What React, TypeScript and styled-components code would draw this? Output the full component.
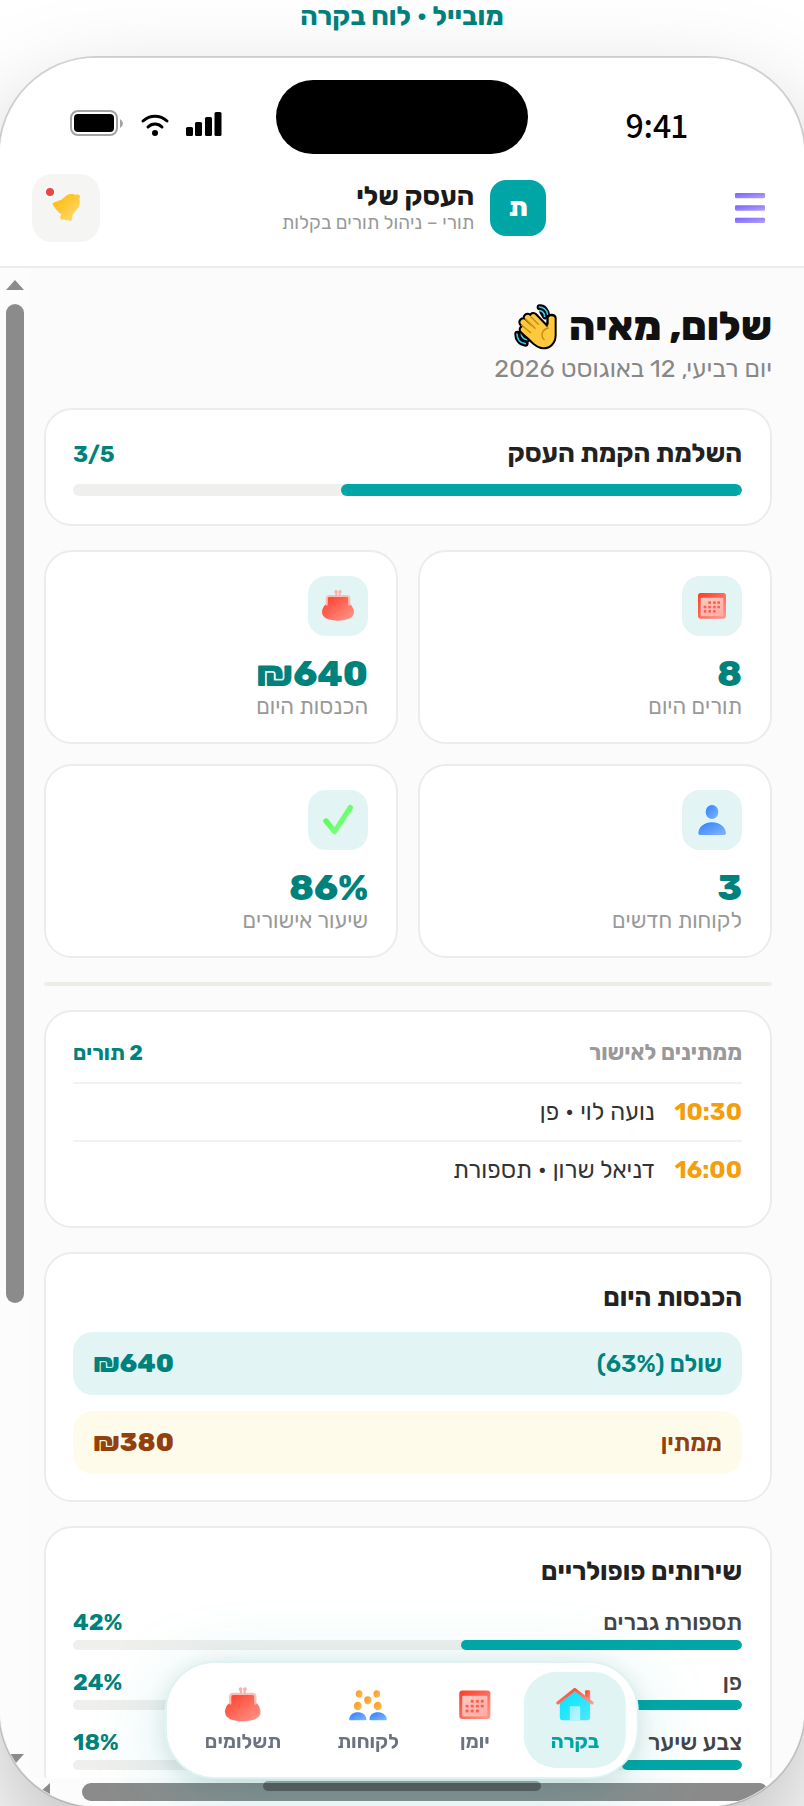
import React from "react";
import styled, { createGlobalStyle } from "styled-components";

const color = {
  teal: "#00a6a6",
  tealDark: "#00827c",
  tealSoft: "#e2f5f4",
  line: "#ecece8",
  ink: "#222222",
  muted: "#999999",
  scroll: "#8b8b8b",
};

const GlobalStyle = createGlobalStyle`
  *, *::before, *::after { box-sizing: border-box; }
  body {
    margin: 0;
    background: #ffffff;
    font-family: Rubik, "Open Sans", "Liberation Sans", sans-serif;
    color: ${color.ink};
  }
  h1, h2, p, ul { margin: 0; padding: 0; }
  button { border: 0; padding: 0; font: inherit; cursor: pointer; }
`;

const Page = styled.div`
  height: 100vh;
  display: flex;
  flex-direction: column;
  overflow: hidden;
`;

const Caption = styled.p`
  margin-bottom: 24px;
  text-align: center;
  font-size: 27px;
  line-height: 32px;
  font-weight: 700;
  color: ${color.tealDark};
`;

const Phone = styled.div`
  position: relative;
  flex: 1;
  min-height: 0;
  margin: 0 -2px -2px;
  display: flex;
  flex-direction: column;
  border: 2px solid rgba(0, 0, 0, 0.16);
  border-radius: 98px;
  background: #ffffff;
  background-clip: padding-box;
  box-shadow: 0 50px 110px rgba(0, 0, 0, 0.26);
`;

const Screen = styled.div`
  flex: 1;
  min-height: 0;
  display: flex;
  flex-direction: column;
  border-radius: 96px;
  overflow: hidden;
`;

const StatusBar = styled.div`
  display: grid;
  grid-template-columns: 1fr 252px 1fr;
  align-items: center;
  padding-top: 22px;
  background: #ffffff;
`;

const Island = styled.div`
  height: 74px;
  border-radius: 37px;
  background: #000000;
`;

const Clock = styled.div`
  padding: 16px 116px 0 0;
  font-family: Assistant, "Open Sans", sans-serif;
  font-size: 36px;
  line-height: 40px;
  font-weight: 600;
  color: #000000;
`;

const StatusIcons = styled.div`
  display: flex;
  justify-content: flex-end;
  padding: 12px 0 0 70px;
`;

const AppHeader = styled.header`
  display: flex;
  align-items: center;
  justify-content: space-between;
  padding: 20px 32px 24px;
  border-bottom: 2px solid ${color.line};
  background: #ffffff;
`;

const MenuButton = styled.button`
  width: 44px;
  height: 44px;
  display: grid;
  place-items: center;
  background: none;
`;

const BellButton = styled.button`
  position: relative;
  width: 68px;
  height: 68px;
  border-radius: 20px;
  display: grid;
  place-items: center;
  background: #f5f5f3;
`;

const BellDot = styled.span`
  position: absolute;
  top: 12px;
  left: 12px;
  width: 12px;
  height: 12px;
  border: 2px solid #ffffff;
  border-radius: 50%;
  background: #ef4444;
`;

const Brand = styled.div`
  display: flex;
  align-items: center;
  gap: 16px;
`;

const BrandMark = styled.span`
  width: 56px;
  height: 56px;
  border-radius: 16px;
  display: grid;
  place-items: center;
  background: ${color.teal};
  color: #ffffff;
  font-size: 26px;
  line-height: 30px;
  font-weight: 800;
`;

const BrandName = styled.p`
  font-size: 27px;
  line-height: 30px;
  font-weight: 700;
  color: #1a1a1a;
`;

const BrandTagline = styled.p`
  font-size: 19px;
  line-height: 24px;
  color: ${color.muted};
`;

const Body = styled.div`
  flex: 1;
  min-height: 0;
  display: grid;
  grid-template-columns: 1fr 30px;
  grid-template-rows: 1fr 28px;
  background: #fcfcfc;
`;

const Content = styled.main`
  overflow: auto;
  scrollbar-width: none;
  display: flex;
  flex-direction: column;
  gap: 24px;
  padding: 32px 32px 140px 14px;
  background: #fbfbfb;
  & > * { flex-shrink: 0; }
`;

const VerticalTrack = styled.div`
  display: flex;
  flex-direction: column;
  align-items: center;
  padding: 12px 0 14px;
`;

const VerticalThumb = styled.div`
  width: 18px;
  height: 67.3%;
  margin: 14px 0 auto;
  border-radius: 9px;
  background: ${color.scroll};
`;

const HorizontalTrack = styled.div`
  grid-column: 1 / -1;
  display: flex;
  align-items: center;
  padding: 0 36px 0 40px;
`;

const HorizontalThumb = styled.div`
  flex: 1;
  height: 18px;
  margin-left: 32px;
  border-radius: 9px;
  background: ${color.scroll};
`;

const Greeting = styled.h1`
  display: flex;
  align-items: center;
  gap: 12px;
  font-size: 40px;
  line-height: 54px;
  font-weight: 800;
  color: #111111;
`;

const Today = styled.p`
  font-size: 25px;
  line-height: 30px;
  color: #888888;
`;

const Card = styled.section`
  padding: 28px 28px 28px 27px;
  border: 2px solid ${color.line};
  border-radius: 28px;
  background: #ffffff;
`;

const RevenueCard = styled(Card)`
  padding-bottom: 26px;
`;

const CardTop = styled.div`
  display: flex;
  align-items: center;
  justify-content: space-between;
`;

const CardTitle = styled.h2`
  font-size: 26px;
  line-height: 32px;
  font-weight: 700;
`;

const Figure = styled.span`
  font-size: 23px;
  line-height: 28px;
  font-weight: 700;
  color: ${color.tealDark};
`;

const Track = styled.div<{ $height: number; $gap: number }>`
  height: ${(p) => p.$height}px;
  margin-top: ${(p) => p.$gap}px;
  border-radius: 6px;
  background: #efefed;
  overflow: hidden;
`;

const Fill = styled.div`
  height: 100%;
  border-radius: 6px;
  background: ${color.teal};
`;

const StatGrid = styled.div`
  display: grid;
  grid-template-columns: 1fr 1fr;
  gap: 20px;
`;

const StatCard = styled(Card)`
  padding-top: 24px;
  padding-bottom: 24px;
`;

const StatIcon = styled.div`
  width: 60px;
  height: 60px;
  border-radius: 18px;
  margin-bottom: 16px;
  display: grid;
  place-items: center;
  background: ${color.tealSoft};
`;

const StatValue = styled.p`
  font-size: 36px;
  line-height: 44px;
  font-weight: 800;
  color: ${color.tealDark};
`;

const StatLabel = styled.p`
  font-size: 22px;
  line-height: 22px;
  color: ${color.muted};
`;

const Divider = styled.hr`
  width: 100%;
  height: 4px;
  margin: 0;
  border: 0;
  border-radius: 2px;
  background: ${color.line};
`;

const PendingTop = styled(CardTop)`
  padding-bottom: 16px;
`;

const PendingTitle = styled.h2`
  font-size: 22px;
  line-height: 26px;
  font-weight: 700;
  color: ${color.muted};
`;

const PendingCount = styled.span`
  font-size: 21px;
  line-height: 26px;
  font-weight: 700;
  color: ${color.tealDark};
`;

const PendingList = styled.ul`
  list-style: none;
`;

const PendingRow = styled.li`
  display: flex;
  gap: 20px;
  padding: 14px 0;
  border-top: 2px solid #f2f2f2;
  font-size: 24px;
  line-height: 28px;
  color: #333333;
`;

const PendingTime = styled.time`
  font-weight: 700;
  color: #f59e0b;
`;

const RevenueRows = styled.div`
  display: grid;
  gap: 16px;
  margin-top: 18px;
`;

const RevenueRow = styled.div<{ $tone: "paid" | "waiting" }>`
  height: 63px;
  display: flex;
  align-items: center;
  justify-content: space-between;
  padding: 0 20px;
  border-radius: 20px;
  font-size: 24px;
  line-height: 28px;
  font-weight: 600;
  background: ${(p) => (p.$tone === "paid" ? color.tealSoft : "#fffbeb")};
  color: ${(p) => (p.$tone === "paid" ? color.tealDark : "#92400e")};
`;

const RevenueAmount = styled.span`
  font-size: 26px;
  font-weight: 800;
`;

const ServiceList = styled.div`
  display: grid;
  gap: 18px;
  margin-top: 20px;
`;

const ServiceName = styled.span`
  font-size: 23px;
  line-height: 28px;
  font-weight: 500;
  color: #444444;
`;

const BottomNav = styled.nav`
  position: absolute;
  bottom: 27px;
  left: 50%;
  transform: translateX(-50%);
  display: flex;
  gap: 2px;
  padding: 9px 11px;
  border: 2px solid #def3f2;
  border-radius: 50px;
  background: #ffffff;
  box-shadow: 0 16px 80px rgba(0, 166, 166, 0.2), 0 4px 24px rgba(0, 0, 0, 0.1);
`;

const NavItem = styled.button<{ $active?: boolean }>`
  display: flex;
  flex-direction: column;
  align-items: center;
  gap: 4px;
  padding: 13px 27px 15px;
  border-radius: 32px;
  background: ${(p) => (p.$active ? "#e0f4f3" : "transparent")};
  color: ${(p) => (p.$active ? color.teal : "#6b7280")};
  font-size: 20px;
  line-height: 24px;
  font-weight: ${(p) => (p.$active ? 700 : 600)};
`;

const HomeIndicator = styled.div`
  position: absolute;
  bottom: 15px;
  left: 50%;
  transform: translateX(-50%);
  width: 278px;
  height: 10px;
  border-radius: 5px;
  background: rgba(0, 0, 0, 0.32);
`;

const HiddenSvg = styled.svg`
  position: absolute;
`;

const gradients: [string, string, string][] = [
  ["g-red", "#ff3b26", "#ff9a90"],
  ["g-pink", "#ffc9c4", "#ffaaa2"],
  ["g-violet", "#7b61ff", "#b3a2ff"],
  ["g-gold", "#ffb800", "#ffdb7a"],
  ["g-blue", "#2b80ff", "#86b6ff"],
  ["g-green", "#45ff45", "#8dff8d"],
  ["g-cyan", "#00e5ff", "#4fe6ff"],
  ["g-ice", "#8ff0ff", "#c2f6ff"],
  ["g-orange", "#ff9412", "#ffc068"],
];

const Gradients = () => (
  <HiddenSvg width="0" height="0" aria-hidden="true">
    <defs>
      {gradients.map(([id, from, to]) => (
        <linearGradient key={id} id={id} x1="0" y1="0" x2="1" y2="1">
          <stop offset="0" stopColor={from} />
          <stop offset="1" stopColor={to} />
        </linearGradient>
      ))}
    </defs>
  </HiddenSvg>
);

type IconProps = { size: number };

const PurseIcon = ({ size }: IconProps) => (
  <svg width={size} height={size} viewBox="960 144 108 108" aria-hidden="true">
    <path fill="url(#g-red)" d="M982 170H1046V190C1057 196 1062 208 1062 217C1062 235 1040 242 1014 242C988 242 966 235 966 217C966 208 971 196 982 190Z" />
    <path fill="none" stroke="#fbbdb7" strokeWidth="6" strokeLinecap="round" d="M980 194V176Q980 168 988 168H1040Q1048 168 1048 176V194" />
    <path stroke="#fbb0a9" strokeWidth="6" d="M1009 156V167M1019 156V167" />
    <circle cx="1008" cy="155" r="5" fill="#fbb0a9" />
    <circle cx="1020" cy="155" r="5" fill="#fbb0a9" />
  </svg>
);

const calendarDots = [
  [923, 188], [937, 188], [950, 188],
  [909, 201], [923, 201], [937, 201], [950, 201],
  [909, 214], [923, 214], [937, 214],
];

const CalendarIcon = ({ size }: IconProps) => (
  <svg width={size} height={size} viewBox="876 144 108 108" aria-hidden="true">
    <rect x="888" y="159" width="84" height="77" rx="8" fill="url(#g-red)" />
    <rect x="896" y="173" width="68" height="56" rx="3" fill="url(#g-pink)" />
    {calendarDots.map(([x, y]) => (
      <rect key={`${x}-${y}`} x={x - 4} y={y - 4} width="8" height="8" rx="2" fill="#ff5f50" />
    ))}
  </svg>
);

const PersonIcon = ({ size }: IconProps) => (
  <svg width={size} height={size} viewBox="876 786 108 108" aria-hidden="true">
    <ellipse cx="930" cy="816" rx="19" ry="21" fill="url(#g-blue)" />
    <path fill="url(#g-blue)" d="M889 879C890 860 908 847 930 847C952 847 970 860 972 879Q972 885 966 885H894Q888 885 889 879Z" />
  </svg>
);

const CheckIcon = ({ size }: IconProps) => (
  <svg width={size} height={size} viewBox="960 786 108 108" aria-hidden="true">
    <path fill="none" stroke="url(#g-green)" strokeWidth="16" strokeLinecap="round" strokeLinejoin="round" d="M978 843L1004 875L1051 803" />
  </svg>
);

const HouseIcon = ({ size }: IconProps) => (
  <svg width={size} height={size} viewBox="454 557 120 120" aria-hidden="true">
    <rect x="545" y="573" width="15" height="34" rx="3" fill="url(#g-red)" />
    <path fill="url(#g-cyan)" d="M469 610L514 574L560 610V654Q560 663 551 663H478Q469 663 469 654Z" />
    <rect x="499" y="621" width="31" height="42" rx="2" fill="url(#g-ice)" />
    <path fill="none" stroke="url(#g-red)" strokeWidth="9" strokeLinecap="round" strokeLinejoin="round" d="M463 611L514 570L566 611" />
  </svg>
);

const PeopleIcon = ({ size }: IconProps) => (
  <svg width={size} height={size} viewBox="1042 557 120 120" aria-hidden="true">
    {[[1076, 584, 10], [1129, 584, 10], [1102, 603, 11], [1072, 620, 12], [1132, 620, 12]].map(([x, y, r]) => (
      <ellipse key={`${x}-${y}`} cx={x} cy={y} rx={r} ry={r + 1} fill="url(#g-orange)" />
    ))}
    <path fill="url(#g-blue)" d="M1046 660C1048 646 1058 639 1072 639C1086 639 1096 646 1098 660Q1098 663 1095 663H1049Q1046 663 1046 660Z" />
    <path fill="url(#g-blue)" d="M1107 660C1108 646 1118 639 1132 639C1146 639 1157 646 1159 660Q1159 663 1156 663H1110Q1107 663 1107 660Z" />
  </svg>
);

const MenuIcon = () => (
  <svg width="32" height="32" viewBox="996 576 96 96" aria-hidden="true">
    {[579, 616, 653].map((y) => (
      <rect key={y} x="999" y={y} width="90" height="16" rx="4" fill="url(#g-violet)" />
    ))}
  </svg>
);

const BellIcon = () => (
  <svg width="36" height="36" viewBox="144 570 108 108" aria-hidden="true">
    <path fill="url(#g-gold)" d="M158 612C158 606 176 605 187 597C196 590 200 582 215 582C221 582 224 584 227 585C231 580 240 583 240 590C240 593 238 595 238 597C242 609 239 619 230 629C218 641 217 646 216 657C215 664 209 665 204 660C200 661 196 661 192 658C187 662 179 657 181 650C181 647 183 645 184 643C176 638 161 622 158 612Z" />
  </svg>
);

const WaveIcon = () => (
  <svg width="43" height="46" viewBox="335 99 129 138" aria-hidden="true">
    <g fill="none" strokeLinecap="round" strokeLinejoin="round">
      <path stroke="#000000" strokeWidth="18" d="M412 109C424 108 434 120 435 134M420 122L428 136M345 188C344 204 354 216 370 218M358 188C358 198 366 206 374 207" />
      <path stroke="#36c5f0" strokeWidth="5" d="M411 108C424 108 434 118 436 130M412 119C420 120 426 127 427 136M344 189C344 205 354 216 369 218M356 186C357 197 364 205 374 206" />
    </g>
    <g stroke="#000000" strokeWidth="30" strokeLinecap="round">
      <path d="M393 138L430 176M376 140L415 184M363 154L405 196M364 176L400 208" />
    </g>
    <path fill="#000000" stroke="#000000" strokeWidth="12" strokeLinejoin="round" d="M425 165L438 158V141C438 132 457 132 457 142V192C457 215 442 229 423 229C405 229 390 212 370 188Z" />
    <g stroke="#ffc83d" strokeWidth="17" strokeLinecap="round">
      <path d="M393 138L430 176M376 140L415 184M363 154L405 196M364 176L400 208" />
    </g>
    <path fill="#ffc83d" d="M395 165L432 175L439 158V141C439 134 457 134 457 142V192C457 215 442 229 423 229C405 229 388 212 370 184Z" />
    <path fill="none" stroke="#c88a14" strokeWidth="4" strokeLinecap="round" d="M386 138L408 160M370 144L398 172M358 163L385 185M438 171C418 176 414 194 425 206" />
  </svg>
);

const StatusGlyphs = () => (
  <svg width="152" height="28" viewBox="70 109 152 28" aria-hidden="true">
    <rect x="71" y="111" width="46" height="24" rx="7" fill="none" stroke="#a3a3a3" strokeWidth="2" />
    <rect x="74" y="114" width="40" height="18" rx="4" />
    <path fill="#a3a3a3" d="M120 119Q123 121 123 123.500Q123 126 120 128Z" />
    <g fill="none" stroke="#000000" strokeWidth="3" strokeLinecap="round">
      <path d="M143 121C150 114.500 160 114.500 167 121" />
      <path d="M148 127C152 123 158 123 162 127" />
    </g>
    <circle cx="155" cy="133" r="3" />
    <rect x="186" y="127" width="7" height="9" rx="1.500" />
    <rect x="195" y="122" width="7" height="14" rx="1.500" />
    <rect x="205" y="117" width="7" height="19" rx="1.500" />
    <rect x="214.500" y="112" width="7" height="24" rx="1.500" />
  </svg>
);

const Arrow = ({ dir }: { dir: "up" | "down" | "left" }) => {
  const shapes = { up: "M0 10H18L9 0Z", down: "M0 0H18L9 10Z", left: "M10 0V18L0 9Z" };
  const flat = dir !== "left";
  return (
    <svg width={flat ? 18 : 10} height={flat ? 10 : 18} aria-hidden="true">
      <path fill={color.scroll} d={shapes[dir]} />
    </svg>
  );
};

const stats = [
  { Icon: CalendarIcon, value: "8", label: "תורים היום" },
  { Icon: PurseIcon, value: "₪640", label: "הכנסות היום" },
  { Icon: PersonIcon, value: "3", label: "לקוחות חדשים" },
  { Icon: CheckIcon, value: "86%", label: "שיעור אישורים" },
];

const pending = [
  { time: "10:30", text: "נועה לוי • פן" },
  { time: "16:00", text: "דניאל שרון • תספורת" },
];

const services = [
  { name: "תספורת גברים", share: 42 },
  { name: "פן", share: 24 },
  { name: "צבע שיער", share: 18 },
];

const navItems = [
  { Icon: HouseIcon, label: "בקרה", active: true },
  { Icon: CalendarIcon, label: "יומן" },
  { Icon: PeopleIcon, label: "לקוחות" },
  { Icon: PurseIcon, label: "תשלומים" },
];

export default function App() {
  return (
    <Page dir="rtl" lang="he">
      <GlobalStyle />
      <Gradients />
      <Caption>מובייל • לוח בקרה</Caption>
      <Phone>
        <Screen>
          <StatusBar>
            <Clock>9:41</Clock>
            <Island />
            <StatusIcons>
              <StatusGlyphs />
            </StatusIcons>
          </StatusBar>
          <AppHeader>
            <MenuButton type="button" aria-label="תפריט">
              <MenuIcon />
            </MenuButton>
            <Brand>
              <BrandMark>ת</BrandMark>
              <div>
                <BrandName>העסק שלי</BrandName>
                <BrandTagline>תורי – ניהול תורים בקלות</BrandTagline>
              </div>
            </Brand>
            <BellButton type="button" aria-label="התראות">
              <BellIcon />
              <BellDot />
            </BellButton>
          </AppHeader>
          <Body>
            <Content>
              <div>
                <Greeting>
                  <span>שלום, מאיה</span>
                  <WaveIcon />
                </Greeting>
                <Today>יום רביעי, 12 באוגוסט 2026</Today>
              </div>
              <Card>
                <CardTop>
                  <CardTitle>השלמת הקמת העסק</CardTitle>
                  <Figure dir="ltr">3/5</Figure>
                </CardTop>
                <Track $height={12} $gap={14}>
                  <Fill style={{ width: `${(3 / 5) * 100}%` }} />
                </Track>
              </Card>
              <StatGrid>
                {stats.map(({ Icon, value, label }) => (
                  <StatCard key={label}>
                    <StatIcon>
                      <Icon size={36} />
                    </StatIcon>
                    <StatValue>
                      <bdi dir="ltr">{value}</bdi>
                    </StatValue>
                    <StatLabel>{label}</StatLabel>
                  </StatCard>
                ))}
              </StatGrid>
              <Divider />
              <Card>
                <PendingTop>
                  <PendingTitle>ממתינים לאישור</PendingTitle>
                  <PendingCount>2 תורים</PendingCount>
                </PendingTop>
                <PendingList>
                  {pending.map(({ time, text }) => (
                    <PendingRow key={time}>
                      <PendingTime>{time}</PendingTime>
                      <span>{text}</span>
                    </PendingRow>
                  ))}
                </PendingList>
              </Card>
              <RevenueCard>
                <CardTitle>הכנסות היום</CardTitle>
                <RevenueRows>
                  <RevenueRow $tone="paid">
                    <span>שולם (63%)</span>
                    <RevenueAmount dir="ltr">₪640</RevenueAmount>
                  </RevenueRow>
                  <RevenueRow $tone="waiting">
                    <span>ממתין</span>
                    <RevenueAmount dir="ltr">₪380</RevenueAmount>
                  </RevenueRow>
                </RevenueRows>
              </RevenueCard>
              <Card>
                <CardTitle>שירותים פופולריים</CardTitle>
                <ServiceList>
                  {services.map(({ name, share }) => (
                    <div key={name}>
                      <CardTop>
                        <ServiceName>{name}</ServiceName>
                        <Figure dir="ltr">{share}%</Figure>
                      </CardTop>
                      <Track $height={10} $gap={4}>
                        <Fill style={{ width: `${share}%` }} />
                      </Track>
                    </div>
                  ))}
                </ServiceList>
              </Card>
            </Content>
            <VerticalTrack aria-hidden="true">
              <Arrow dir="up" />
              <VerticalThumb />
              <Arrow dir="down" />
            </VerticalTrack>
            <HorizontalTrack aria-hidden="true">
              <HorizontalThumb />
              <Arrow dir="left" />
            </HorizontalTrack>
          </Body>
          <BottomNav>
            {navItems.map(({ Icon, label, active }) => (
              <NavItem key={label} type="button" $active={active} aria-current={active ? "page" : undefined}>
                <Icon size={40} />
                {label}
              </NavItem>
            ))}
          </BottomNav>
          <HomeIndicator />
        </Screen>
      </Phone>
    </Page>
  );
}
